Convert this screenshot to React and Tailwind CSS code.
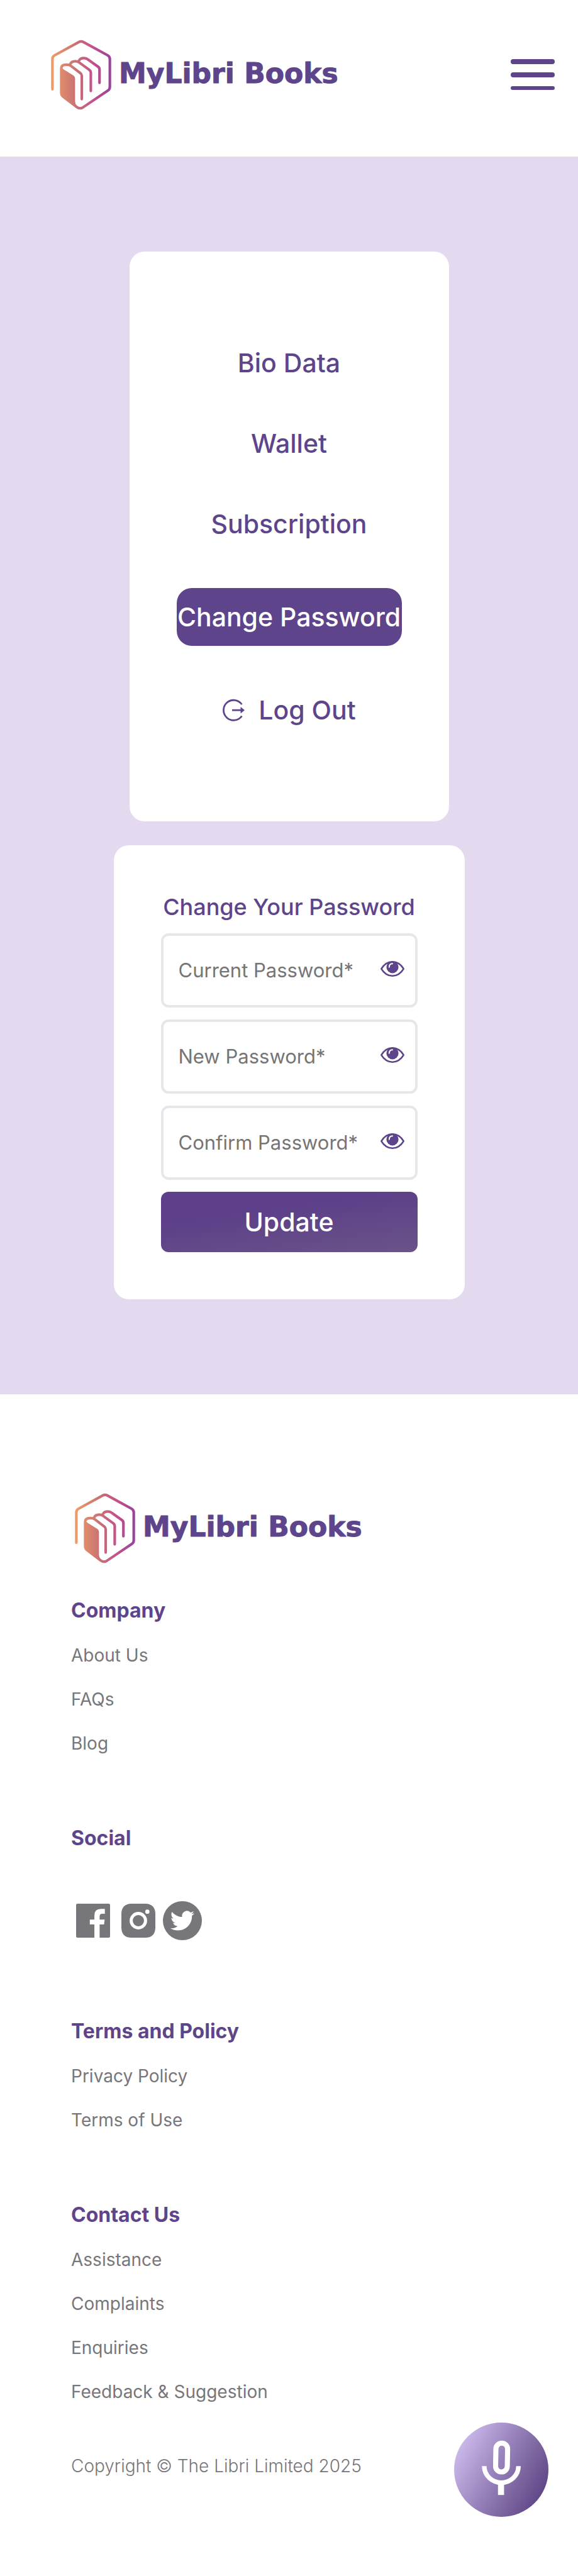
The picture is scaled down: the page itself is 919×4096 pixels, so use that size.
import React from "react";

const NAV_ITEMS = ["Bio Data", "Wallet", "Subscription"];

const FIELDS = [
  { id: "current-password", label: "Current Password*" },
  { id: "new-password", label: "New Password*" },
  { id: "confirm-password", label: "Confirm Password*" },
];

function Logo({ id }) {
  const paint = `url(#${id})`;
  return (
    <a href="#home" aria-label="MyLibri Books" className="flex w-fit items-start">
      <svg className="h-[112px] w-[96px] shrink-0" viewBox="38 30 368 428" fill="none">
        <defs>
          <linearGradient id={id} gradientUnits="userSpaceOnUse" x1="40" y1="0" x2="405" y2="0">
            <stop offset="0" stopColor="#f09c66" />
            <stop offset="0.4" stopColor="#c87373" />
            <stop offset="0.7" stopColor="#c44f8b" />
            <stop offset="1" stopColor="#96439a" />
          </linearGradient>
        </defs>
        <g stroke={paint} strokeWidth="16" strokeLinecap="round" strokeLinejoin="round">
          <path d="M47 332V148Q47 133 60 125L208 44Q222 36 236 44L384 125Q397 133 397 148V318Q397 332 385 340L238 439Q217 456 196 441L112 377Q101 367 101 353V203Q101 183 130 182Q150 181 159 189L219 235Q226 240 226 251V392" />
          <path d="M155 180Q162 161 186 161Q200 161 209 168L272 214Q281 221 281 232V342" />
          <path d="M209 157Q216 142 240 142Q254 142 263 150L326 195Q334 201 334 212V293" />
        </g>
        <path
          fill={paint}
          d="M95 200V355Q96 370 108 380L195 444L222 447Q187 437 185 408V266Q185 255 175 248L118 212Q106 204 104 198Z"
        />
      </svg>
      <svg className="ml-[10px] h-[112px] w-[370px]" viewBox="0 0 370 112">
        <text
          x="2"
          y="69"
          fill="#5e458b"
          stroke="#5e458b"
          strokeWidth="1"
          strokeLinejoin="round"
          className="font-['DejaVu_Sans',sans-serif] text-[44px] font-bold"
        >
          MyLibri Books
        </text>
      </svg>
    </a>
  );
}

function LogoutIcon() {
  return (
    <svg className="size-[36px]" viewBox="0 0 36 36" fill="none" aria-hidden="true">
      <path d="M31.5 9A16 16 0 1 0 31.5 27.500" stroke="currentColor" strokeWidth="2.800" />
      <path d="M16 18.200H31" stroke="currentColor" strokeWidth="2.800" />
      <path d="M29.500 13L36 18.200L29.500 23.500Z" fill="currentColor" />
    </svg>
  );
}

function EyeIcon() {
  return (
    <svg className="h-[25px] w-[38px]" viewBox="0 0 38 25" fill="none" aria-hidden="true">
      <path
        d="M1.300 12.500C5.500 5.500 11.500 1.300 19 1.300S32.500 5.500 36.700 12.500C32.500 19.500 26.500 23.700 19 23.700S5.500 19.500 1.300 12.500Z"
        stroke="currentColor"
        strokeWidth="2.500"
        strokeLinejoin="round"
      />
      <circle cx="19" cy="9.800" r="9.600" fill="currentColor" />
      <path d="M13.800 9.800Q13.800 4.600 19 4.300" stroke="white" strokeWidth="2" strokeLinecap="round" />
    </svg>
  );
}

function FooterGroup({ title, links }) {
  return (
    <section className="flex flex-col items-start gap-[30px]">
      <h2 className="text-[32px] leading-[42px] font-bold text-[#5e458b]">{title}</h2>
      {links.map((link) => (
        <a key={link} href="#footer" className="text-[28px] leading-[40px]">
          {link}
        </a>
      ))}
    </section>
  );
}

export default function App() {
  return (
    <div className="min-h-screen bg-white font-['Inter',sans-serif] text-[#77767b]">
      <header className="flex h-[249px] items-start justify-between pt-[63px] pr-[37px] pl-[81px]">
        <Logo id="header-logo" />
        <button type="button" aria-label="Open menu" className="mt-[31px] flex w-[70px] flex-col text-[#5e458b]">
          <span className="h-[8px] w-full rounded-full bg-current" />
          <span className="mt-[13px] h-[8px] w-full rounded-full bg-current" />
          <span className="mt-[14px] h-[6px] w-full rounded-full bg-current" />
        </button>
      </header>

      <main className="flex flex-col items-center gap-[38px] bg-[#e3daef] py-[151px] text-[#5e458b]">
        <nav className="flex flex-col items-center gap-[76px] rounded-3xl bg-white px-[75px] py-[151px] text-[41px] leading-[52px] font-medium">
          {NAV_ITEMS.map((item) => (
            <a key={item} href="#account">
              {item}
            </a>
          ))}
          <a
            href="#password"
            aria-current="page"
            className="flex h-[92px] w-[358px] items-center justify-center rounded-3xl bg-[#5e458b] whitespace-nowrap text-white"
          >
            Change Password
          </a>
          <button type="button" className="flex items-center gap-[22px]">
            <LogoutIcon />
            Log Out
          </button>
        </nav>

        <form className="flex w-[558px] flex-col gap-[19px] rounded-3xl bg-white p-[75px]">
          <h1 className="text-center text-[36px] leading-[46px] font-medium whitespace-nowrap">
            Change Your Password
          </h1>
          {FIELDS.map((field) => (
            <div
              key={field.id}
              className="flex h-[118px] items-center rounded-xl border-4 border-[#e5e7eb] pr-[17px] pl-[24px]"
            >
              <input
                id={field.id}
                type="password"
                aria-label={field.label}
                placeholder={field.label}
                className="w-full min-w-0 flex-1 bg-transparent text-[31px] leading-[40px] outline-none placeholder:text-[#757575]"
              />
              <button type="button" aria-label="Show password" className="mb-[6px] shrink-0">
                <EyeIcon />
              </button>
            </div>
          ))}
          <button
            type="submit"
            className="h-[96px] rounded-xl bg-[linear-gradient(172deg,#5d4089_35%,#6a5488_100%)] text-[41px] leading-[52px] font-medium text-white"
          >
            Update
          </button>
        </form>
      </main>

      <footer id="footer" className="flex flex-col items-start px-[113px] pt-[157px] pb-[155px]">
        <div className="pl-[6px]">
          <Logo id="footer-logo" />
        </div>
        <div className="mt-[54px] flex flex-col items-start gap-[110px]">
          <FooterGroup title="Company" links={["About Us", "FAQs", "Blog"]} />
          <section className="flex flex-col items-start gap-[30px]">
            <h2 className="text-[32px] leading-[42px] font-bold text-[#5e458b]">Social</h2>
            <div className="flex items-center pt-[49px] pb-[14px] pl-[8px]">
              <a href="#facebook" aria-label="Facebook">
                <svg className="size-[54px]" viewBox="0 0 208 208">
                  <path
                    fill="currentColor"
                    d="M8 0H200Q208 0 208 8V200Q208 208 200 208H144V127H171L175 97H144V79Q144 62 160 62H176V32H152Q112 32 112 72V97H84V127H112V208H8Q0 208 0 200V8Q0 0 8 0Z"
                  />
                </svg>
              </a>
              <a href="#instagram" aria-label="Instagram" className="ml-[18px]">
                <svg className="size-[54px]" viewBox="0 0 208 208">
                  <path
                    fill="currentColor"
                    d="M60 0Q104-2 148 0Q206 2 208 60Q210 104 208 148Q206 206 148 208Q104 210 60 208Q2 206 0 148Q-2 104 0 60Q2 2 60 0Z"
                  />
                  <circle cx="104" cy="104" r="44" fill="none" stroke="white" strokeWidth="19" />
                  <circle cx="159" cy="49" r="13" fill="white" />
                </svg>
              </a>
              <a href="#twitter" aria-label="Twitter" className="ml-[12px]">
                <svg className="size-[62px]" viewBox="0 0 234 234">
                  <circle cx="117" cy="117" r="117" fill="currentColor" />
                  <path
                    transform="translate(45 45) scale(6)"
                    fill="white"
                    d="M23.953 4.570a10 10 0 01-2.825.775 4.958 4.958 0 002.163-2.723c-.951.555-2.005.959-3.127 1.184a4.920 4.920 0 00-8.384 4.482C7.690 8.095 4.067 6.130 1.640 3.162a4.822 4.822 0 00-.666 2.475c0 1.710.870 3.213 2.188 4.096a4.904 4.904 0 01-2.228-.616v.060a4.923 4.923 0 003.946 4.827 4.996 4.996 0 01-2.212.085 4.936 4.936 0 004.604 3.417 9.867 9.867 0 01-6.102 2.105c-.390 0-.779-.023-1.170-.067a13.995 13.995 0 007.557 2.209c9.053 0 13.998-7.496 13.998-13.985 0-.210 0-.420-.015-.630A9.935 9.935 0 0024 4.590z"
                  />
                </svg>
              </a>
            </div>
          </section>
          <FooterGroup title="Terms and Policy" links={["Privacy Policy", "Terms of Use"]} />
          <FooterGroup
            title="Contact Us"
            links={["Assistance", "Complaints", "Enquiries", "Feedback & Suggestion"]}
          />
        </div>
        <p className="mt-[78px] text-[28px] leading-[40px] font-light">Copyright © The Libri Limited 2025</p>
      </footer>

      <button
        type="button"
        aria-label="Voice assistant"
        className="fixed right-[47px] bottom-[94px] size-[150px] rounded-full bg-[linear-gradient(118deg,#d6c4f4_5%,#9a84bd_45%,#7e68a1_65%,#573c80_95%)]"
      >
        <svg className="size-full" viewBox="0 0 573 573" fill="none" stroke="white" aria-hidden="true">
          <rect x="253" y="125" width="71" height="175" rx="35" strokeWidth="31" transform="rotate(1 288 212)" />
          <path d="M183 265A104 100 0 0 0 391 265" strokeWidth="28" />
          <path d="M285 365V440" strokeWidth="37" />
        </svg>
      </button>
    </div>
  );
}
